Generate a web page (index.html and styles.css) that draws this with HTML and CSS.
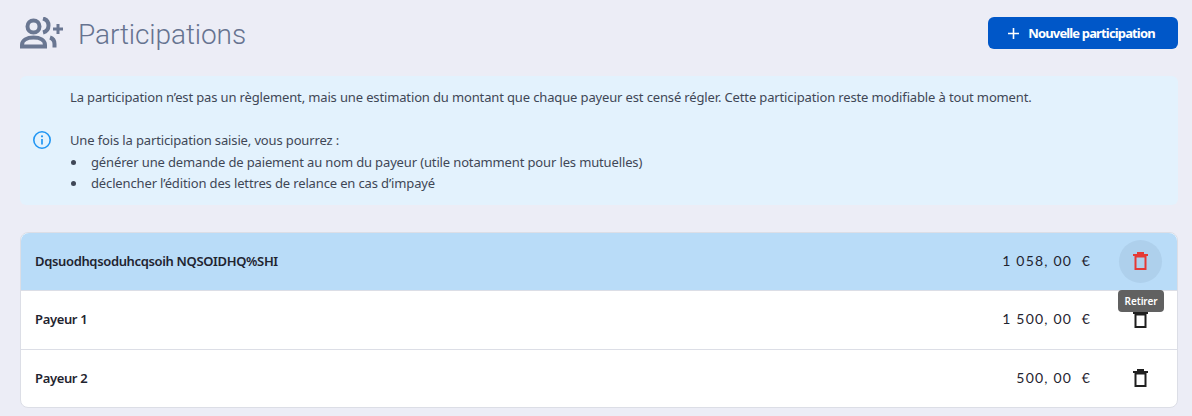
FILE: index.html
```html
<!DOCTYPE html>
<html lang="fr">

<head>
  <meta charset="utf-8">
  <title>Participations</title>
  <link rel="stylesheet" href="styles.css">
</head>

<body>
  <header class="page-header">
    <div class="page-title">
      <svg class="title-icon" width="44" height="32" viewBox="0 0 44 32">
        <g fill="none" stroke="#6a7792" stroke-width="4">
          <circle cx="13.500" cy="9.500" r="6"></circle>
          <path d="M23 1.500c4 1 5.500 4 5.500 7s-1.500 6-5.500 7"></path>
          <path d="M2 29.500v-1.500c0-5 5-7.500 11.500-7.500s11.500 2.500 11.500 7.500v1.500z"></path>
          <path d="M30 20.500c3 1 4.500 3.500 4.500 6.500v3.500"></path>
        </g>
        <path d="M36.500 7h3v3.500H43v3h-3.500V17h-3v-3.500H33v-3h3.500z" fill="#6a7792"></path>
      </svg>
      <h1>Participations</h1>
    </div>
    <button class="btn-primary">
      <svg width="11" height="11" viewBox="0 0 11 11"><path d="M5.500 0v11M0 5.500h11" stroke="#fff" stroke-width="1.600"></path></svg>
      <span>Nouvelle participation</span>
    </button>
  </header>

  <section class="notice">
    <svg class="notice-icon" width="20" height="20" viewBox="0 0 20 20">
      <circle cx="10" cy="10" r="8.200" fill="none" stroke="#2196f3" stroke-width="1.600"></circle>
      <path d="M10 9v5.500" stroke="#2196f3" stroke-width="1.700"></path>
      <circle cx="10" cy="6.300" r="1.100" fill="#2196f3"></circle>
    </svg>
    <div class="notice-text">
      <p>La participation n’est pas un règlement, mais une estimation du montant que chaque payeur est censé régler. Cette participation reste modifiable à tout moment.</p>
      <p>Une fois la participation saisie, vous pourrez :</p>
      <ul>
        <li>générer une demande de paiement au nom du payeur (utile notamment pour les mutuelles)</li>
        <li>déclencher l’édition des lettres de relance en cas d’impayé</li>
      </ul>
    </div>
  </section>

  <section class="payers">
    <div class="payer-row selected">
      <span class="payer-name">Dqsuodhqsoduhcqsoih NQSOIDHQ%SHI</span>
      <span class="payer-amount">1 058, 00 &nbsp;€</span>
      <button class="btn-delete">
        <svg width="15" height="18" viewBox="0 0 15 18"><path d="M0 3h15M5 3V1h5v2M2.500 4.500h10V17h-10z" fill="none" stroke="#e53935" stroke-width="2"></path></svg>
      </button>
      <span class="tooltip">Retirer</span>
    </div>
    <div class="payer-row">
      <span class="payer-name">Payeur 1</span>
      <span class="payer-amount">1 500, 00 &nbsp;€</span>
      <button class="btn-delete">
        <svg width="15" height="18" viewBox="0 0 15 18"><path d="M0 3h15M5 3V1h5v2M2.500 4.500h10V17h-10z" fill="none" stroke="#1f1f1f" stroke-width="2"></path></svg>
      </button>
    </div>
    <div class="payer-row">
      <span class="payer-name">Payeur 2</span>
      <span class="payer-amount">500, 00 &nbsp;€</span>
      <button class="btn-delete">
        <svg width="15" height="18" viewBox="0 0 15 18"><path d="M0 3h15M5 3V1h5v2M2.500 4.500h10V17h-10z" fill="none" stroke="#1f1f1f" stroke-width="2"></path></svg>
      </button>
    </div>
  </section>
</body>

</html>
```

FILE: styles.css
```css
html {
  --text-color: #3f4756;
  --line-color: #dcdee6;
}

body {
  margin: 0;
  padding: 17px 14px 8px 20px;
  background: #ecedf6;
  font-family: "Noto Sans", sans-serif;
  font-size: 13px;
  letter-spacing: -0.14px;
  color: var(--text-color);
  overflow: hidden;
}

.page-header {
  display: flex;
  justify-content: space-between;
  align-items: center;
  height: 32px;
}

.page-title {
  display: flex;
  align-items: center;
}

.title-icon {
  margin-right: 14px;
}

h1 {
  margin: 2px 0 0;
  font-family: Roboto, sans-serif;
  font-size: 28px;
  font-weight: 300;
  letter-spacing: -0.1px;
  color: #667390;
}

.btn-primary {
  display: flex;
  align-items: center;
  justify-content: center;
  gap: 9px;
  width: 190px;
  height: 32px;
  padding: 0 3px 0 0;
  border: 0;
  border-radius: 6px;
  background: #0057c8;
  color: #fff;
  font-family: "Noto Sans", sans-serif;
  font-size: 13px;
  font-weight: 700;
  letter-spacing: -0.85px;
}

.notice {
  display: flex;
  align-items: center;
  height: 129px;
  margin-top: 27px;
  padding-left: 12px;
  border-radius: 6px;
  background: #e3f2fd;
}

.notice-icon {
  margin: 0 18px 2px 0;
}

.notice-text p {
  margin: 0 0 22px;
  line-height: 21px;
}

.notice-text p + p {
  margin-bottom: 1px;
}

.notice-text ul {
  margin: 0;
  padding: 0;
  list-style: none;
  line-height: 21px;
}

.notice-text li {
  display: flex;
  align-items: center;
}

.notice-text li::before {
  content: "";
  width: 5px;
  height: 5px;
  margin: 0 15px 0 1px;
  border-radius: 50%;
  background: var(--text-color);
}

.payers {
  margin-top: 27px;
  border: 1px solid var(--line-color);
  border-radius: 8px;
  background: #fff;
}

.payer-row {
  position: relative;
  display: flex;
  align-items: center;
  height: 57px;
  padding: 0 15px 0 14px;
  border-top: 1px solid var(--line-color);
  color: #1f2430;
}

.payer-row:first-child {
  border-top: 0;
  border-radius: 8px 8px 0 0;
}

.payer-row:nth-child(2) {
  height: 58px;
}

.payer-row.selected {
  background: #b9dcf8;
}

.payer-name {
  flex: 1;
  margin-bottom: 2px;
  font-weight: 600;
  letter-spacing: -0.35px;
}

.payer-amount {
  font-family: Lato, sans-serif;
  font-size: 14px;
  letter-spacing: 1.200px;
  margin-bottom: 3px;
}

.btn-delete {
  display: flex;
  align-items: center;
  justify-content: center;
  width: 43px;
  height: 43px;
  margin-left: 28px;
  padding: 0 0 2px;
  border: 0;
  border-radius: 50%;
  background: transparent;
}

.selected .btn-delete {
  background: #aed0ec;
}

.tooltip {
  position: absolute;
  top: 57px;
  right: 13px;
  width: 46px;
  text-align: center;
  padding: 2px 0;
  border-radius: 4px;
  background: #616161;
  color: #fff;
  font-size: 10px;
  font-weight: 600;
  letter-spacing: -0.1px;
  line-height: 18px;
  z-index: 1;
}
```
